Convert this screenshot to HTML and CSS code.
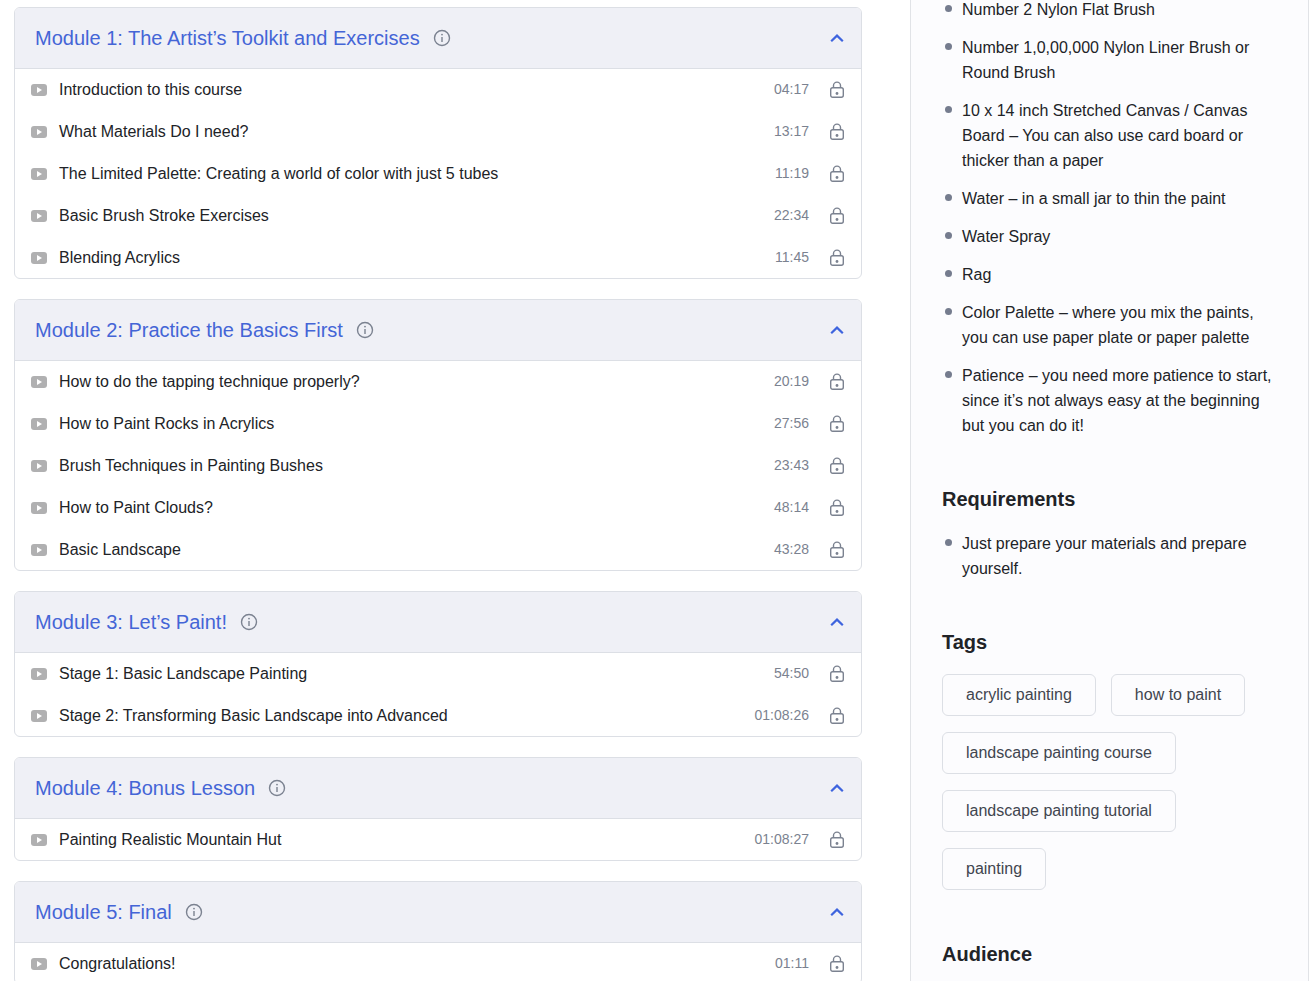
FILE: index.html
```html
<!DOCTYPE html>
<html lang="en">
    <head>
        <meta charset="utf-8">
        <title>Course Content</title>
        <meta name="viewport" content="width=device-width, initial-scale=1">
        <link rel="stylesheet" href="styles.css">
    </head>
    <body>
        <!-- shared icons -->
        <svg class="sprite" aria-hidden="true">
            <symbol id="play" viewBox="0 0 16 12">
                <rect width="16" height="12" rx="3" fill="#b0b0b1"/>
                <path d="M6 3v6l5-3z" fill="#fff"/>
            </symbol>
            <symbol id="lock" viewBox="0 0 16 18">
                <rect x="1.7" y="6.7" width="12.6" height="9.6" rx="2" fill="none" stroke="#7b8290" stroke-width="1.4"/>
                <path d="M4.5 6.7V4.6a3.5 3.5 0 0 1 7 0v2.1" fill="none" stroke="#7b8290" stroke-width="1.4"/>
                <circle cx="8" cy="12.5" r="1.4" fill="#7b8290"/>
            </symbol>
            <symbol id="info" viewBox="0 0 18 18">
                <circle cx="9" cy="9" r="7.5" fill="none" stroke="#7b8290" stroke-width="1.4"/>
                <path d="M9 8v5" stroke="#7b8290" stroke-width="1.4"/>
                <circle cx="9" cy="5.6" r="0.9" fill="#7b8290"/>
            </symbol>
            <symbol id="up" viewBox="0 0 14 10">
                <path d="M1.2 8.2L7 2.6l5.8 5.6" fill="none" stroke="#3e64de" stroke-width="2.2"/>
            </symbol>
        </svg>
        <div class="container">
            <main class="course">
                <section class="module">
                    <div class="module-header">
                        <h3 class="module-title">Module 1: The Artist’s Toolkit and Exercises</h3>
                        <button type="button" class="btn-info" aria-label="Info"><svg><use href="#info"/></svg></button>
                        <button type="button" class="btn-toggle" aria-label="Toggle" aria-expanded="true"><svg><use href="#up"/></svg></button>
                    </div>
                    <ul class="lessons">
                        <li><svg class="play"><use href="#play"/></svg><span class="name">Introduction to this course</span><span class="time">04:17</span><svg class="lock"><use href="#lock"/></svg></li>
                        <li><svg class="play"><use href="#play"/></svg><span class="name">What Materials Do I need?</span><span class="time">13:17</span><svg class="lock"><use href="#lock"/></svg></li>
                        <li><svg class="play"><use href="#play"/></svg><span class="name">The Limited Palette: Creating a world of color with just 5 tubes</span><span class="time">11:19</span><svg class="lock"><use href="#lock"/></svg></li>
                        <li><svg class="play"><use href="#play"/></svg><span class="name">Basic Brush Stroke Exercises</span><span class="time">22:34</span><svg class="lock"><use href="#lock"/></svg></li>
                        <li><svg class="play"><use href="#play"/></svg><span class="name">Blending Acrylics</span><span class="time">11:45</span><svg class="lock"><use href="#lock"/></svg></li>
                    </ul>
                </section>
                <section class="module">
                    <div class="module-header">
                        <h3 class="module-title">Module 2: Practice the Basics First</h3>
                        <button type="button" class="btn-info" aria-label="Info"><svg><use href="#info"/></svg></button>
                        <button type="button" class="btn-toggle" aria-label="Toggle" aria-expanded="true"><svg><use href="#up"/></svg></button>
                    </div>
                    <ul class="lessons">
                        <li><svg class="play"><use href="#play"/></svg><span class="name">How to do the tapping technique properly?</span><span class="time">20:19</span><svg class="lock"><use href="#lock"/></svg></li>
                        <li><svg class="play"><use href="#play"/></svg><span class="name">How to Paint Rocks in Acrylics</span><span class="time">27:56</span><svg class="lock"><use href="#lock"/></svg></li>
                        <li><svg class="play"><use href="#play"/></svg><span class="name">Brush Techniques in Painting Bushes</span><span class="time">23:43</span><svg class="lock"><use href="#lock"/></svg></li>
                        <li><svg class="play"><use href="#play"/></svg><span class="name">How to Paint Clouds?</span><span class="time">48:14</span><svg class="lock"><use href="#lock"/></svg></li>
                        <li><svg class="play"><use href="#play"/></svg><span class="name">Basic Landscape</span><span class="time">43:28</span><svg class="lock"><use href="#lock"/></svg></li>
                    </ul>
                </section>
                <section class="module">
                    <div class="module-header">
                        <h3 class="module-title">Module 3: Let’s Paint!</h3>
                        <button type="button" class="btn-info" aria-label="Info"><svg><use href="#info"/></svg></button>
                        <button type="button" class="btn-toggle" aria-label="Toggle" aria-expanded="true"><svg><use href="#up"/></svg></button>
                    </div>
                    <ul class="lessons">
                        <li><svg class="play"><use href="#play"/></svg><span class="name">Stage 1: Basic Landscape Painting</span><span class="time">54:50</span><svg class="lock"><use href="#lock"/></svg></li>
                        <li><svg class="play"><use href="#play"/></svg><span class="name">Stage 2: Transforming Basic Landscape into Advanced</span><span class="time">01:08:26</span><svg class="lock"><use href="#lock"/></svg></li>
                    </ul>
                </section>
                <section class="module">
                    <div class="module-header">
                        <h3 class="module-title">Module 4: Bonus Lesson</h3>
                        <button type="button" class="btn-info" aria-label="Info"><svg><use href="#info"/></svg></button>
                        <button type="button" class="btn-toggle" aria-label="Toggle" aria-expanded="true"><svg><use href="#up"/></svg></button>
                    </div>
                    <ul class="lessons">
                        <li><svg class="play"><use href="#play"/></svg><span class="name">Painting Realistic Mountain Hut</span><span class="time">01:08:27</span><svg class="lock"><use href="#lock"/></svg></li>
                    </ul>
                </section>
                <section class="module">
                    <div class="module-header">
                        <h3 class="module-title">Module 5: Final</h3>
                        <button type="button" class="btn-info" aria-label="Info"><svg><use href="#info"/></svg></button>
                        <button type="button" class="btn-toggle" aria-label="Toggle" aria-expanded="true"><svg><use href="#up"/></svg></button>
                    </div>
                    <ul class="lessons">
                        <li><svg class="play"><use href="#play"/></svg><span class="name">Congratulations!</span><span class="time">01:11</span><svg class="lock"><use href="#lock"/></svg></li>
                    </ul>
                </section>
            </main>
            <aside class="sidebar">
                <ul class="list">
                    <li>Number 2 Nylon Flat Brush</li>
                    <li>Number 1,0,00,000 Nylon Liner Brush or Round Brush</li>
                    <li>10 x 14 inch Stretched Canvas / Canvas Board – You can also use card board or thicker than a paper</li>
                    <li>Water – in a small jar to thin the paint</li>
                    <li>Water Spray</li>
                    <li>Rag</li>
                    <li>Color Palette – where you mix the paints, you can use paper plate or paper palette</li>
                    <li>Patience – you need more patience to start, since it’s not always easy at the beginning but you can do it!</li>
                </ul>
                <h3 class="side-title">Requirements</h3>
                <ul class="list">
                    <li>Just prepare your materials and prepare yourself.</li>
                </ul>
                <h3 class="side-title">Tags</h3>
                <div class="tags">
                    <a href="#">acrylic painting</a>
                    <a href="#">how to paint</a>
                    <a href="#">landscape painting course</a>
                    <a href="#">landscape painting tutorial</a>
                    <a href="#">painting</a>
                </div>
                <h3 class="side-title">Audience</h3>
            </aside>
        </div>
    </body>
</html>
```

FILE: styles.css
```css
*{
    margin: 0;
    padding: 0;
    box-sizing: border-box;
}
body{
    font-family: "Liberation Sans", Arial, sans-serif;
    font-size: 16px;
    line-height: 25px;
    color: #212327;
    background-color: #fff;
    height: 100vh;
    overflow: hidden;
}
ul{
    list-style: none;
}
svg{
    display: block;
    flex-shrink: 0;
}
.sprite{
    display: none;
}
.container{
    display: grid;
    grid-template-columns: 1fr 399px;
    gap: 48px;
    min-height: 100vh;
    padding: 0 5px 0 14px;
}
.course{
    display: flex;
    flex-direction: column;
    gap: 20px;
    padding-top: 7px;
}
.module{
    border: 1px solid #dcdfe5;
    border-radius: 6px;
    overflow: hidden;
}
.module-header{
    display: flex;
    align-items: center;
    padding: 15px 17px 15px 20px;
    background-color: #eff0f6;
    border-bottom: 1px solid #dcdfe5;
}
.module-title{
    font-size: 20px;
    line-height: 30px;
    font-weight: normal;
    color: #4465d6;
}
.module-header button{
    border: none;
    background: none;
    cursor: pointer;
}
.btn-info{
    margin-left: 13px;
}
.btn-info svg{
    width: 18px;
    height: 18px;
}
.btn-toggle{
    margin-left: auto;
}
.btn-toggle svg{
    width: 14px;
    height: 10px;
}
.lessons{
    display: flex;
    flex-direction: column;
    gap: 1px;
}
.lessons li{
    display: flex;
    align-items: center;
    padding: 8px 16px;
}
.play{
    width: 16px;
    height: 12px;
    margin-right: 12px;
}
.name{
    flex: 1;
}
.time{
    font-size: 14px;
    color: #7b8290;
    margin-right: 20px;
}
.lock{
    width: 16px;
    height: 18px;
}
.sidebar{
    padding: 0 31px;
    background-color: #fcfcfe;
    border: 1px solid #e1e3e7;
    border-width: 0 1px;
}
.list{
    display: flex;
    flex-direction: column;
    gap: 13px;
    margin-top: -3px;
    margin-bottom: 46px;
}
.list li{
    position: relative;
    padding-left: 20px;
}
.list li::before{
    content: "";
    position: absolute;
    left: 3px;
    top: 8px;
    width: 7px;
    height: 7px;
    border-radius: 50%;
    background-color: #757c8e;
}
.side-title{
    font-size: 20px;
    line-height: 30px;
    margin-bottom: 17px;
}
.side-title + .list{
    margin-top: 0;
}
.tags{
    display: flex;
    flex-wrap: wrap;
    gap: 16px 15px;
    margin-bottom: 49px;
}
.tags a{
    padding: 7px 23px 8px;
    border: 1px solid #dcdfe5;
    border-radius: 6px;
    color: #41454f;
    text-decoration: none;
}
```
